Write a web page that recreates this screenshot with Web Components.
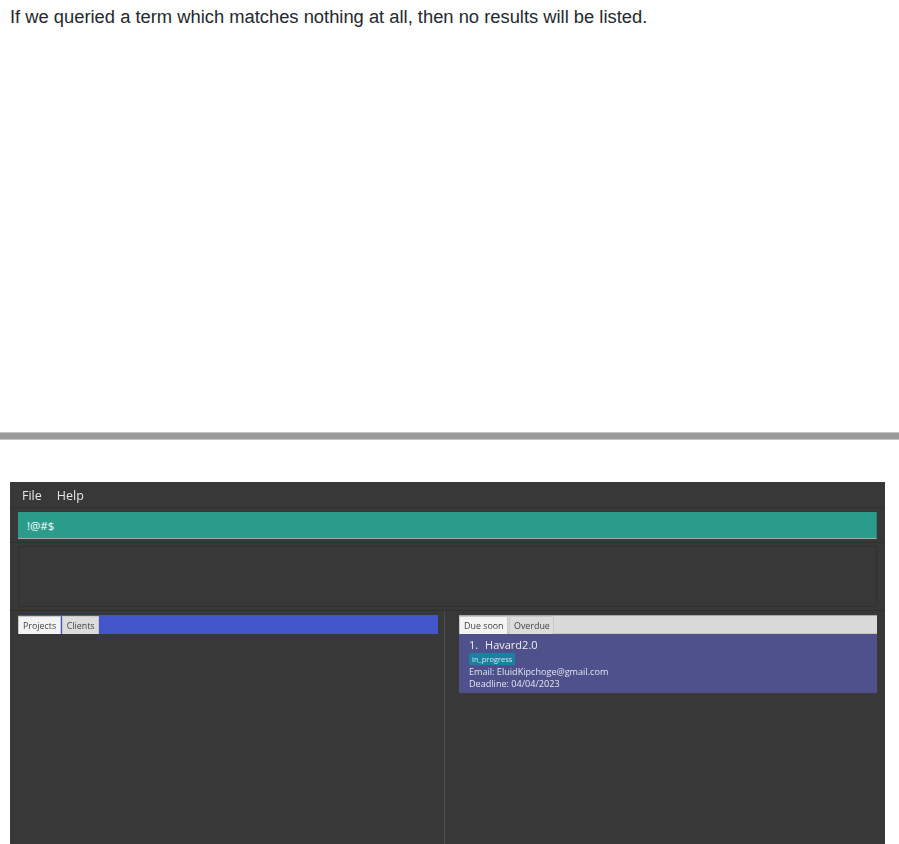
<!DOCTYPE html>
<html>
<head>
<meta charset="utf-8">
<title>Find</title>
<style>
	html, body { margin: 0; height: 844px; overflow: hidden; background: #fff; }
	body { display: flex; flex-direction: column; }
</style>
</head>
<body>
<doc-text>If we queried a term which matches nothing at all, then no results will be listed.</doc-text>
<doc-rule></doc-rule>
<app-window>
	<app-menu></app-menu>
	<command-box value="!@#$"></command-box>
	<result-box></result-box>
	<list-split></list-split>
</app-window>
<script>
(function() {
	function define(name, html, props) {
		class Element extends HTMLElement {
			constructor() {
				super();
				this.attachShadow({mode: "open"}).innerHTML = html;
				if (props) props(this);
			}
		}
		customElements.define(name, Element);
	}

	define("doc-text", `
		<style>
			:host { display: block; height: 34px; padding: 6px 10px 0; box-sizing: border-box; font: 18.35px/21px "Liberation Sans", Arial, sans-serif; color: #24292e; }
		</style>
		<slot></slot>`);

	define("doc-rule", `
		<style>
			:host { display: block; height: 8px; margin: 398px 0 42px; box-sizing: border-box; background: #9b9b9b; border-top: 1px solid #c4c4c4; border-bottom: 1px solid #c4c4c4; }
		</style>`);

	define("app-window", `
		<style>
			:host { display: flex; flex-direction: column; flex: 1; min-height: 0; margin: 0 14px 0 10px; background: #383838; font-family: "Open Sans", "Noto Sans", sans-serif; }
		</style>
		<slot></slot>`);

	define("app-menu", `
		<style>
			:host { display: flex; height: 26px; padding: 1px 0 0 12px; gap: 15px; box-sizing: border-box; align-items: center; font-size: 12.5px; color: #e6e6e6; border-bottom: 1px solid #313131; }
			span { filter: blur(0.3px); }
		</style>
		<span>File</span><span>Help</span>`);

	define("command-box", `
		<style>
			:host { display: block; padding: 4px 8px 3px; border-bottom: 1px solid #2f2f2f; }
			input { display: block; width: 100%; height: 27px; box-sizing: border-box; padding: 0 9px; border: 0; border-bottom: 1px solid #a8a8a8; border-right: 1px solid #3c7f72; outline: 0; background: #2b9c8b; color: #fff; font: 11.5px "Open Sans", "Noto Sans", sans-serif; }
		</style>
		<input id="field" type="text">`, function(el) {
			el.shadowRoot.getElementById("field").value = el.getAttribute("value");
		});

	define("result-box", `
		<style>
			:host { display: block; padding: 3px 8px; border-bottom: 1px solid #2f2f2f; }
			div { height: 61px; box-sizing: border-box; border: 1px solid #303030; }
		</style>
		<div></div>`);

	define("tab-button", `
		<style>
			:host { display: flex; align-items: center; height: 18px; padding: 0 3.5px 0 4px; box-sizing: border-box; font-size: 8.9px; color: #444; background: #dcdcdc; border: 1px solid #c8c8c8; border-bottom: 0; border-radius: 1px 1px 0 0; }
			:host([selected]) { background: #f4f4f4; color: #444; }
			span { filter: blur(0.25px); }
		</style>
		<span><slot></slot></span>`);

	define("tab-pane", `
		<style>
			:host { display: block; }
			.header { display: flex; gap: 1px; height: 19px; box-sizing: border-box; background: var(--bar, #dadada); border-top: 1px solid var(--bar-edge, #a8a8a8); border-bottom: 1px solid var(--bar-line, #c4c4c4); }
		</style>
		<div class="header"><slot name="tab"></slot></div>
		<slot></slot>`);

	define("project-card", `
		<style>
			:host { display: block; height: 59px; padding: 3px 10px 0 10px; box-sizing: border-box; background: #4f518c; color: #e4e4ee; font-size: 9.1px; line-height: 12.5px; }
			.text { filter: blur(0.25px); }
			.name { font-size: 11px; line-height: 15px; color: #eee; }
			.name span { margin-right: 4px; }
			.tag { display: block; width: 40px; height: 12px; margin: 1px 0 0.5px 0; padding: 0 3px; line-height: 12px; font-size: 7.5px; background: #1a82a0; color: #cfe6ec; border-radius: 1px; }
		</style>
		<div class="text">
			<div class="name"><span>1.</span> Havard2.0</div>
			<span class="tag">in_progress</span>
			<div>Email: EluidKipchoge@gmail.com</div>
			<div>Deadline: 04/04/2023</div>
		</div>`);

	define("list-split", `
		<style>
			:host { display: grid; grid-template-columns: 435px 1fr; flex: 1; min-height: 0; }
			.left { padding: 4px 6px 0 8px; border-right: 1px solid #4c4c4c; }
			.right { padding: 4px 8px 0 14px; }
			.blue { --bar: #4255c9; --bar-edge: #4255c9; --bar-line: #4255c9; }
		</style>
		<div class="left">
			<tab-pane class="blue">
				<tab-button slot="tab" selected>Projects</tab-button>
				<tab-button slot="tab">Clients</tab-button>
			</tab-pane>
		</div>
		<div class="right">
			<tab-pane>
				<tab-button slot="tab" selected>Due soon</tab-button>
				<tab-button slot="tab">Overdue</tab-button>
				<project-card></project-card>
			</tab-pane>
		</div>`);
})();
</script>
</body>
</html>
